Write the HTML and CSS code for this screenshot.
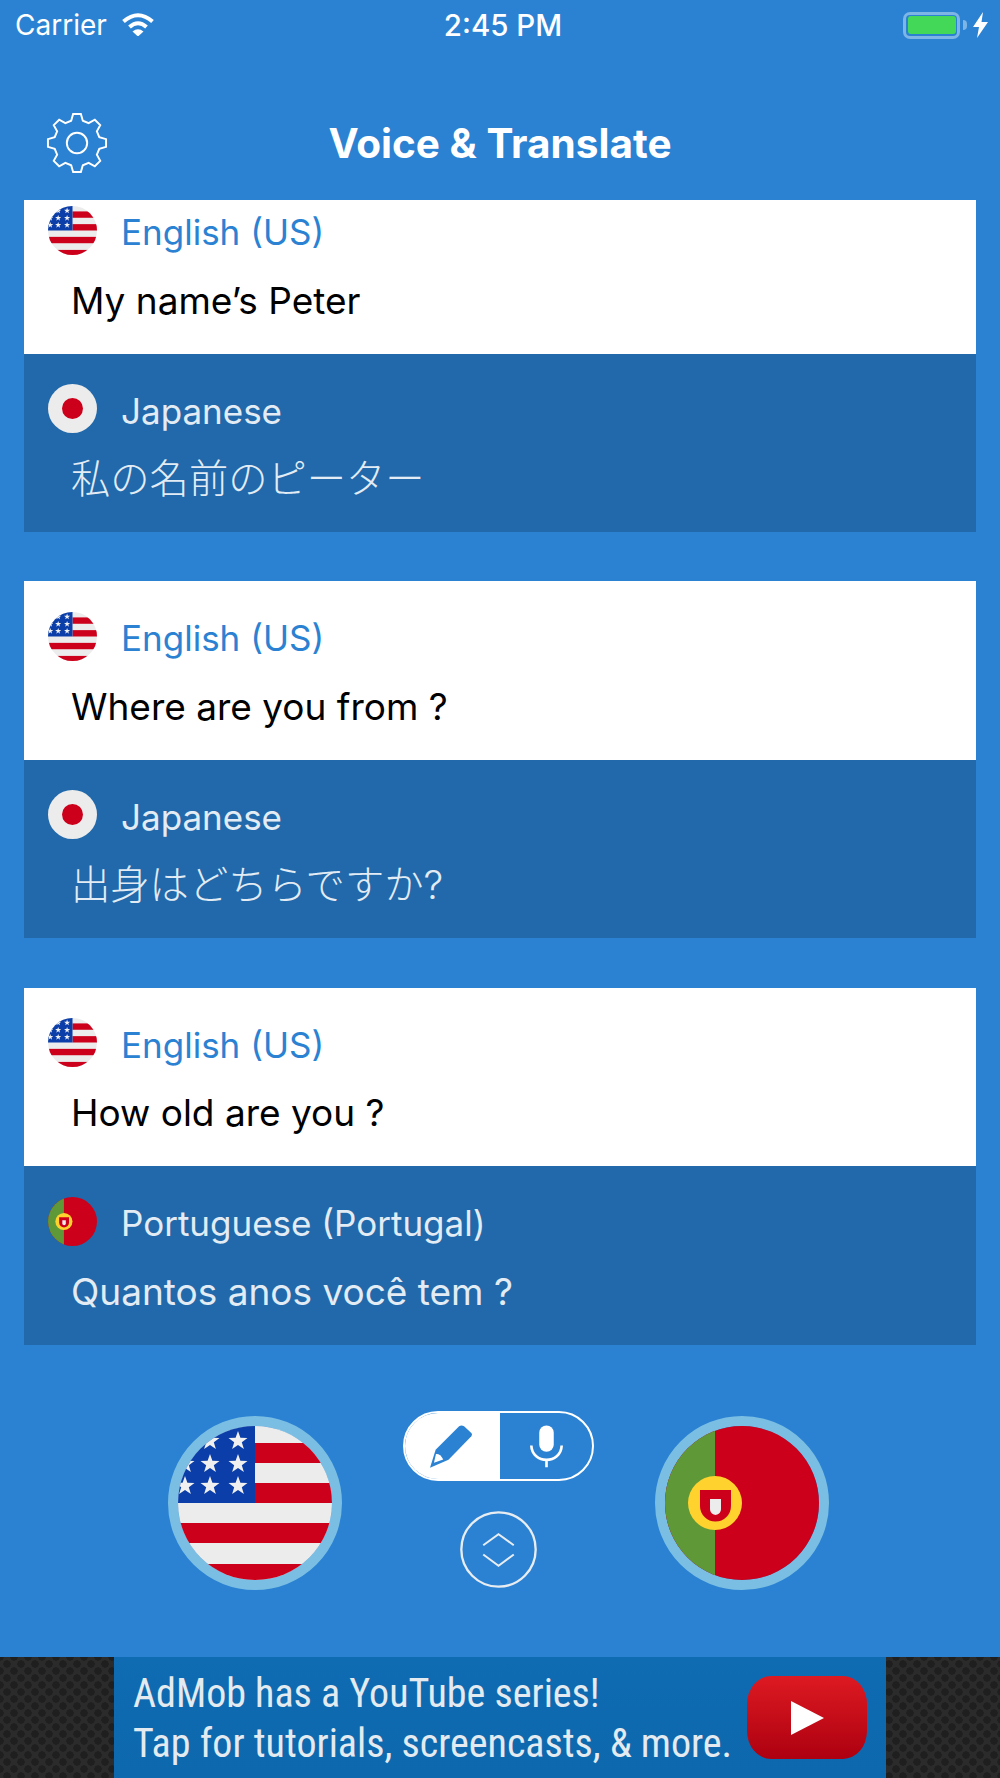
FILE: index.html
```html
<!DOCTYPE html>
<html lang="en">
<head>
    <meta charset="UTF-8">
    <meta name="viewport" content="width=device-width, initial-scale=1.0">
    <title>Voice &amp; Translate</title>
    <link rel="stylesheet" href="styles.css">
</head>
<body>
    <!-- flags, drawn once and reused at both sizes -->
    <svg class="defs" width="0" height="0" aria-hidden="true">
        <defs>
            <clipPath id="round"><circle cx="77" cy="77" r="77"/></clipPath>
            <polygon id="star" points="0,-10 2.4,-3.2 9.5,-3.1 3.8,1.2 5.9,8.1 0,4 -5.9,8.1 -3.8,1.2 -9.5,-3.1 -2.4,-3.2"/>
            <symbol id="flag-us" viewBox="0 0 154 154">
                <g clip-path="url(#round)">
                    <rect width="154" height="154" fill="#ececec"/>
                    <rect y="17" x="77" width="77" height="20" fill="#cc001b"/>
                    <rect y="57" x="77" width="77" height="20" fill="#cc001b"/>
                    <rect y="97" width="154" height="20" fill="#cc001b"/>
                    <rect y="138" width="154" height="16" fill="#cc001b"/>
                    <rect width="77" height="77" fill="#0b3ea8"/>
                    <g fill="#f0f0f0">
                        <use href="#star" x="60" y="15"/>
                        <use href="#star" x="32" y="15"/>
                        <use href="#star" x="60" y="38"/>
                        <use href="#star" x="32" y="38"/>
                        <use href="#star" x="7" y="38"/>
                        <use href="#star" x="60" y="60"/>
                        <use href="#star" x="32" y="60"/>
                        <use href="#star" x="7" y="60"/>
                    </g>
                </g>
            </symbol>
            <symbol id="flag-jp" viewBox="0 0 154 154">
                <circle cx="77" cy="77" r="77" fill="#ececec"/>
                <circle cx="77" cy="77" r="33" fill="#cc001b"/>
            </symbol>
            <symbol id="flag-pt" viewBox="0 0 154 154">
                <g clip-path="url(#round)">
                    <rect width="154" height="154" fill="#cc001b"/>
                    <rect width="50" height="154" fill="#5f9937"/>
                    <circle cx="50" cy="77" r="27" fill="#ffd22e"/>
                    <path d="M35 64H66V80A15.500 15.500 0 0 1 35 80Z" fill="#cc001b"/>
                    <path d="M45 73H56V83Q56 88 50.500 89Q45 88 45 83Z" fill="#ececec"/>
                </g>
            </symbol>
        </defs>
    </svg>

    <div class="statusbar">
        <div class="status-left">
            <span>Carrier</span>
            <svg class="wifi" viewBox="0 0 34 24">
                <path d="M2.500 9.500Q17-3 31.500 9.500M8.500 15Q17 7.500 25.500 15" fill="none" stroke="#fff" stroke-width="4"/>
                <path d="M11.500 19.500Q17 15 22.500 19.500L17 24.500Z" fill="#fff"/>
            </svg>
        </div>
        <div class="status-time">2:45 PM</div>
        <div class="status-right">
            <div class="battery"><div class="battery-level"></div></div>
            <div class="battery-nub"></div>
            <svg class="bolt" viewBox="0 0 15 26">
                <path d="M10 0L0 15H6L4 26L15 10H8.500Z" fill="#fff"/>
            </svg>
        </div>
    </div>

    <div class="header">
        <svg class="gear" viewBox="0 0 64 64">
            <path d="M26 9L28 2H36L38 9L44 11.500L50.400 8L56 13.600L52.500 20L55 26L62 28V36L55 38L52.500 44L56 50.400L50.400 56L44 52.500L38 55L36 62H28L26 55L20 52.500L13.600 56L8 50.400L11.500 44L9 38L2 36V28L9 26L11.500 20L8 13.600L13.600 8L20 11.500Z" fill="none" stroke="#fff" stroke-width="2"/>
            <circle cx="32" cy="32" r="10.500" fill="none" stroke="#fff" stroke-width="2"/>
        </svg>
        <h1>Voice &amp; Translate</h1>
    </div>

    <div class="list">
        <div class="card first">
            <div class="row source">
                <div class="lang"><svg class="flag"><use href="#flag-us"/></svg><span>English (US)</span></div>
                <p class="phrase">My name’s Peter</p>
            </div>
            <div class="row target">
                <div class="lang"><svg class="flag"><use href="#flag-jp"/></svg><span>Japanese</span></div>
                <p class="phrase" lang="ja">私の名前のピーター</p>
            </div>
        </div>

        <div class="card">
            <div class="row source">
                <div class="lang"><svg class="flag"><use href="#flag-us"/></svg><span>English (US)</span></div>
                <p class="phrase">Where are you from ?</p>
            </div>
            <div class="row target">
                <div class="lang"><svg class="flag"><use href="#flag-jp"/></svg><span>Japanese</span></div>
                <p class="phrase" lang="ja">出身はどちらですか?</p>
            </div>
        </div>

        <div class="card">
            <div class="row source">
                <div class="lang"><svg class="flag"><use href="#flag-us"/></svg><span>English (US)</span></div>
                <p class="phrase">How old are you ?</p>
            </div>
            <div class="row target">
                <div class="lang"><svg class="flag"><use href="#flag-pt"/></svg><span>Portuguese (Portugal)</span></div>
                <p class="phrase" lang="pt">Quantos anos você tem ?</p>
            </div>
        </div>
    </div>

    <div class="controls">
        <div class="big-flag"><svg><use href="#flag-us"/></svg></div>
        <div class="middle">
            <div class="toggle">
                <div class="toggle-side active">
                    <svg class="pencil" viewBox="0 0 127 128">
                        <path d="M88 3L17 74L0 128L56 104L125 33Q129 28 125 23L103 3Q95-2 88 3Z" fill="#2b82d3"/>
                        <path d="M18 87Q30 85 40 103L12 113Z" fill="#fff"/>
                    </svg>
                </div>
                <div class="toggle-side">
                    <svg class="mic" viewBox="0 0 100 130">
                        <rect x="28" y="1" width="44" height="80" rx="22" fill="#fff"/>
                        <path d="M4 62C6 120 94 120 96 62M50 104V128" fill="none" stroke="#fff" stroke-width="8"/>
                    </svg>
                </div>
            </div>
            <svg class="swap" viewBox="0 0 232 232">
                <circle cx="116" cy="116" r="112" fill="none" stroke="#e8edf2" stroke-width="7"/>
                <path d="M70 103L116 70L162 103M70 131L116 165L162 131" fill="none" stroke="#e8edf2" stroke-width="6"/>
            </svg>
        </div>
        <div class="big-flag"><svg><use href="#flag-pt"/></svg></div>
    </div>

    <div class="adbar">
        <div class="ad">
            <div class="ad-text">
                <div>AdMob has a YouTube series!</div>
                <div>Tap for tutorials, screencasts, &amp; more.</div>
            </div>
            <div class="yt-button">
                <svg viewBox="0 0 33 34"><path d="M0 0L33 17L0 34Z" fill="#fff"/></svg>
            </div>
        </div>
    </div>
</body>
</html>
```

FILE: styles.css
```css
body {
    margin: 0;
    height: 1778px;
    overflow: hidden;
    display: flex;
    flex-direction: column;
    background-color: #2b82d3;
    font-family: Inter, "Noto Sans CJK JP", sans-serif;
    color: white;
}

.defs {
    position: absolute;
}

.statusbar {
    display: flex;
    align-items: center;
    height: 50px;
    padding: 0 12px 0 15px;
    font-size: 28px;
}

.status-left {
    flex: 1;
    display: flex;
    align-items: center;
    gap: 14px;
}

.status-time {
    margin-left: 3px;
    font-size: 29.500px;
    font-weight: 500;
}

.status-right {
    flex: 1;
    display: flex;
    align-items: center;
    justify-content: flex-end;
}

.wifi {
    width: 34px;
    height: 24px;
    margin-top: -3px;
}

.battery {
    width: 51px;
    height: 21px;
    border: 3px solid #7db5e6;
    border-radius: 7px;
    display: flex;
    align-items: center;
    justify-content: center;
}

.battery-level {
    width: 48px;
    height: 18px;
    border-radius: 3px;
    background-color: #44d858;
}

.battery-nub {
    width: 4px;
    height: 10px;
    margin-left: 3px;
    background-color: #7db5e6;
    border-radius: 0 4px 4px 0;
}

.bolt {
    width: 15px;
    height: 26px;
    margin-left: 6px;
}

.header {
    display: grid;
    grid-template-columns: 1fr auto 1fr;
    align-items: center;
    height: 150px;
    padding: 36px 46px 0;
    box-sizing: border-box;
}

.gear {
    width: 62px;
    height: 62px;
}

h1 {
    margin: 0;
    font-size: 40.500px;
    font-weight: 700;
}

.list {
    height: 1145px;
    margin: 0 24px;
    overflow: hidden;
    flex-shrink: 0;
}

.card {
    margin-bottom: 49.200px;
}

.card.first {
    margin-top: -24.750px;
}

.row {
    height: 178.500px;
    padding: 31px 0 0 24px;
    box-sizing: border-box;
}

.source {
    background-color: white;
    color: black;
}

.source .lang {
    color: #2b82d3;
}

.target {
    background-color: #2169aa;
    color: #e3ecf4;
}

.lang {
    display: flex;
    align-items: center;
    gap: 24px;
    height: 48px;
    font-size: 35px;
}

.lang span {
    margin-top: 4px;
}

.flag {
    width: 49px;
    height: 49px;
}

.phrase {
    margin: 24.500px 0 0 23px;
    font-size: 37px;
    line-height: 44px;
}

.phrase:lang(ja) {
    font-size: 39.300px;
    font-weight: 300;
}

.controls {
    flex: 1;
    display: flex;
    justify-content: center;
    align-items: flex-start;
    gap: 61px;
    padding: 66px 3px 0 0;
}

.big-flag {
    width: 154px;
    height: 154px;
    margin-top: 5px;
    border: 10px solid #7abfe3;
    border-radius: 50%;
}

.big-flag svg {
    display: block;
    width: 154px;
    height: 154px;
}

.middle {
    display: flex;
    flex-direction: column;
    align-items: center;
    gap: 30px;
}

.toggle {
    display: flex;
    width: 191px;
    height: 70px;
    box-sizing: border-box;
    border: 2px solid white;
    border-radius: 35px;
    overflow: hidden;
}

.toggle-side {
    flex: 1;
    display: flex;
    align-items: center;
    justify-content: center;
}

.toggle-side.active {
    flex: none;
    width: 95px;
    background-color: white;
}

.pencil {
    width: 42px;
    height: 43px;
    margin-right: 4px;
}

.mic {
    width: 33px;
    height: 43px;
}

.swap {
    width: 77px;
    height: 77px;
}

.adbar {
    height: 121px;
    display: flex;
    justify-content: center;
    background-color: #2b2b2b;
    background-image:
        radial-gradient(circle, #1f1f1f 35%, transparent 40%),
        radial-gradient(circle, #1f1f1f 35%, transparent 40%);
    background-size: 14px 14px;
    background-position: 0 0, 7px 7px;
}

.ad {
    width: 772px;
    display: flex;
    align-items: center;
    justify-content: space-between;
    padding: 2px 19px 0 19px;
    box-sizing: border-box;
    background: linear-gradient(#0f6bb2, #0d68ad);
}

.ad-text {
    font-family: "Roboto Condensed", Roboto, sans-serif;
    font-stretch: condensed;
    font-size: 40px;
    line-height: 50px;
    color: #e4ebf0;
    white-space: nowrap;
}

.yt-button {
    flex-shrink: 0;
    width: 120px;
    height: 83px;
    margin-top: -2px;
    display: flex;
    align-items: center;
    justify-content: center;
    border-radius: 24px / 28px;
    background: linear-gradient(#dd1a22, #ad0010);
}

.yt-button svg {
    width: 33px;
    height: 34px;
}
```
